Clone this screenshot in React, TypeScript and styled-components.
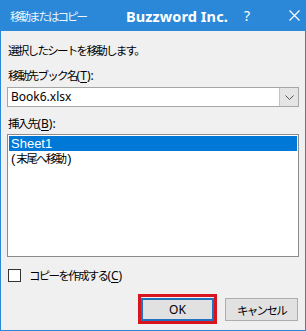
import React from 'react'
import styled, { createGlobalStyle } from 'styled-components'

const GlobalStyle = createGlobalStyle`
  html, body {
    margin: 0;
    padding: 0;
    background: #f0f0f0;
  }
  body {
    font-family: "Noto Sans", "Noto Sans CJK JP", sans-serif;
    font-size: 12px;
    color: #000;
  }
`

const Window = styled.div`
  display: flex;
  flex-direction: column;
  width: 306px;
  height: 331px;
  box-sizing: border-box;
  border: 1px solid #2b88d8;
  border-top: none;
  background: #f0f0f0;
`

const TitleBar = styled.div`
  display: flex;
  align-items: center;
  height: 31px;
  margin: 0 -1px;
  padding-left: 10px;
  background: #2b88d8;
  color: #fff;
`

const TitleText = styled.span`
  font-family: "Noto Sans CJK JP", sans-serif;
  font-size: 11.5px;
  letter-spacing: -2px;
  color: #eef5fc;
  width: 116px;
`

const Brand = styled.span`
  font-family: "Noto Sans", sans-serif;
  font-weight: 700;
  font-size: 14.5px;
  letter-spacing: 0.1px;
`

const Help = styled.span`
  margin-left: 16px;
  font-family: "Noto Sans", sans-serif;
  font-size: 14px;
`

const CloseBtn = styled.span`
  display: flex;
  margin-left: 39px;
`

const Body = styled.div`
  display: flex;
  flex-direction: column;
  flex: 1;
  padding: 0 6px 9px 6px;
`

const Jp = styled.span`
  display: inline-block;
  font-family: "Noto Sans CJK JP", sans-serif;
  font-size: 11.5px;
  letter-spacing: -1.7px;
`

const Line = styled.div<{ $top: number }>`
  margin-top: ${p => p.$top}px;
  padding-left: 1px;
  height: 16px;
  line-height: 16px;
  white-space: nowrap;
`

const Key = styled.span`
  text-decoration: underline;
  text-underline-offset: 2px;
`

const Combo = styled.div`
  display: flex;
  margin-top: 4px;
  height: 20px;
  box-sizing: border-box;
  border: 1px solid #a6a6a6;
  background: #fff;
`

const ComboValue = styled.div`
  flex: 1;
  padding-left: 3px;
  line-height: 18px;
`

const ComboButton = styled.div`
  display: flex;
  align-items: center;
  justify-content: center;
  width: 18px;
  background: #e5e5e5;
  border-left: 1px solid #c4c4c4;
`

const ListBox = styled.div`
  margin-top: 3px;
  height: 123px;
  box-sizing: border-box;
  border: 1px solid #8c8c8c;
  background: #fff;
  padding: 1px;
`

const ListRow = styled.div<{ $selected?: boolean }>`
  display: flex;
  align-items: center;
  height: 15px;
  padding-left: 2px;
  font-family: "Liberation Sans", "Noto Sans CJK JP", sans-serif;
  font-size: 13px;
  line-height: 15px;
  background: ${p => (p.$selected ? '#0078d7' : 'transparent')};
  color: ${p => (p.$selected ? '#fff' : '#000')};
  white-space: nowrap;
`

const RowJp = styled.span`
  font-family: "Noto Sans CJK JP", sans-serif;
  font-size: 11.5px;
  letter-spacing: -1.7px;
  line-height: 15px;
  height: 15px;
  padding: 0 2px 0 1px;
  overflow: hidden;
`

const CheckRow = styled.label`
  display: flex;
  align-items: center;
  gap: 8px;
  margin-top: 10px;
  height: 16px;
  padding-left: 1px;
`

const CheckBox = styled.span`
  width: 13px;
  height: 13px;
  box-sizing: border-box;
  border: 1px solid #333;
  background: #fff;
`

const ButtonRow = styled.div`
  display: flex;
  justify-content: flex-end;
  gap: 11px;
  margin-top: auto;
  padding-right: 1px;
`

const Button = styled.div<{ $default?: boolean }>`
  position: relative;
  display: flex;
  align-items: center;
  justify-content: center;
  width: 73px;
  height: 23px;
  box-sizing: border-box;
  background: #e1e1e1;
  border: ${p => (p.$default ? '2px solid #1f73c1' : '1px solid #adadad')};
`

const Highlight = styled.span`
  position: absolute;
  inset: -6px -5px -5px -5px;
  border: 3px solid #d8141e;
  pointer-events: none;
`

const App = () => {
  return (
    <Window>
      <GlobalStyle />
      <TitleBar>
        <TitleText>移動またはコピー</TitleText>
        <Brand>Buzzword Inc.</Brand>
        <Help>?</Help>
        <CloseBtn>
          <svg width="11" height="11" viewBox="0 0 11 11">
            <path d="M0.5 0.5 L10.5 10.5 M10.5 0.5 L0.5 10.5" stroke="#fff" strokeWidth="1.2" />
          </svg>
        </CloseBtn>
      </TitleBar>
      <Body>
        <Line $top={11}>
          <Jp>選択したシートを移動します。</Jp>
        </Line>
        <Line $top={9}>
          <Jp>移動先ブック名</Jp>(<Key>T</Key>):
        </Line>
        <Combo>
          <ComboValue>Book6.xlsx</ComboValue>
          <ComboButton>
            <svg width="9" height="5" viewBox="0 0 9 5">
              <path d="M0.5 0.5 L4.5 4.5 L8.5 0.5" fill="none" stroke="#555" strokeWidth="1" />
            </svg>
          </ComboButton>
        </Combo>
        <Line $top={8}>
          <Jp>挿入先</Jp>(<Key>B</Key>):
        </Line>
        <ListBox>
          <ListRow $selected>Sheet1</ListRow>
          <ListRow>
            (<RowJp>末尾へ移動</RowJp>)
          </ListRow>
        </ListBox>
        <CheckRow>
          <CheckBox />
          <span>
            <Jp>コピーを作成する</Jp>(<Key>C</Key>)
          </span>
        </CheckRow>
        <ButtonRow>
          <Button $default>
            OK
            <Highlight />
          </Button>
          <Button>
            <Jp>キャンセル</Jp>
          </Button>
        </ButtonRow>
      </Body>
    </Window>
  )
}

export default App
